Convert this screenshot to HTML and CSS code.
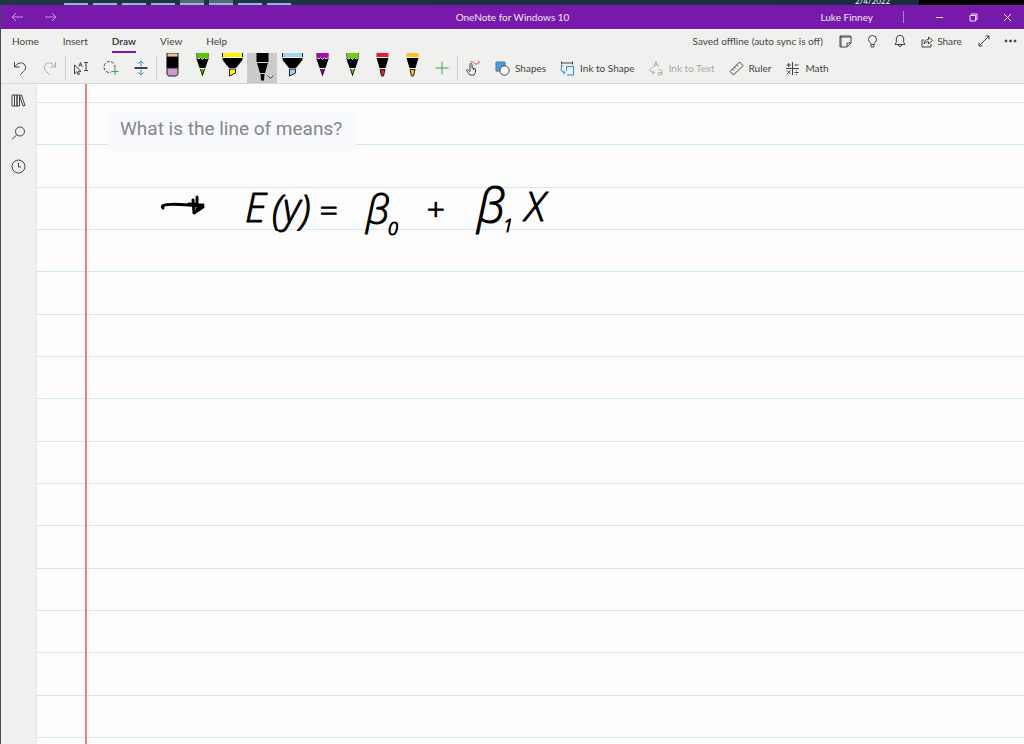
FILE: index.html
```html
<!DOCTYPE html>
<html lang="en">
<head>
  <meta charset="utf-8">
  <title>OneNote for Windows 10</title>
  <link rel="stylesheet" href="styles.css">
</head>
<body>
  <div class="taskbar">
    <div class="running">
      <i></i><i></i><i></i><i></i><i class="active"></i><i class="active"></i><i></i><i></i>
    </div>
    <div class="date">2/4/2022</div>
    <div class="desktop"></div>
  </div>

  <div class="app">
    <header class="titlebar">
      <div class="nav">
        <button aria-label="Back"><svg width="13" height="10" viewBox="0 0 13 10"><path d="M12 5H1M5 1L1 5l4 4"/></svg></button>
        <button aria-label="Forward"><svg width="13" height="10" viewBox="0 0 13 10"><path d="M1 5h11M8 1l4 4-4 4"/></svg></button>
      </div>
      <div class="title">OneNote for Windows 10</div>
      <div class="window">
        <span class="user">Luke Finney</span>
        <span class="bar"></span>
        <button aria-label="Minimize"><svg width="9" height="9" viewBox="0 0 9 9"><path d="M1 4.500h7"/></svg></button>
        <button aria-label="Restore"><svg width="9" height="9" viewBox="0 0 9 9"><path d="M1 2.500h5.500v5.500H1zM2.500 2.500V1H8v5.500H6.500"/></svg></button>
        <button aria-label="Close"><svg width="9" height="9" viewBox="0 0 9 9"><path d="M1 1l7 7M8 1L1 8"/></svg></button>
      </div>
    </header>

    <div class="ribbon">
      <div class="menu">
        <nav class="tabs">
          <a href="#">Home</a>
          <a href="#">Insert</a>
          <a href="#" class="current">Draw</a>
          <a href="#">View</a>
          <a href="#">Help</a>
        </nav>
        <div class="status">
          <span class="sync">Saved offline (auto sync is off)</span>
          <button aria-label="Feed"><svg width="13" height="13" viewBox="0 0 13 13"><path d="M1 1h11v7l-4 4H1zM12 8H8v4"/><path d="M1 2h11M2 1v11"/></svg></button>
          <button aria-label="Tell me"><svg width="11" height="13" viewBox="0 0 11 13"><path d="M4 9.500C4 7.500 1.500 7 1.500 4.500a4 4 0 0 1 8 0C9.500 7 7 7.500 7 9.500zM4 9.500V12h3V9.500"/></svg></button>
          <button aria-label="Notifications"><svg width="12" height="14" viewBox="0 0 12 14"><path d="M1 10.500h10L9.700 8.500V5a3.700 3.700 0 0 0-7.400 0v3.500zM4.500 11a1.500 1.500 0 0 0 3 0"/></svg></button>
          <button class="share"><svg width="12" height="13" viewBox="0 0 12 13"><path d="M3 5H1v7h9V9M3 9c0-3 2-4.500 4.500-4.500V2L11.500 5.500 7.500 9V6.700C5.500 6.700 4 7.500 3 9z"/></svg>Share</button>
          <button aria-label="Full screen"><svg width="12" height="12" viewBox="0 0 12 12"><path d="M1 11L11 1M7.500 1H11v3.500M1 7.500V11h3.500"/></svg></button>
          <button class="more" aria-label="More"><svg width="13" height="4" viewBox="0 0 13 4"><circle cx="2" cy="2" r="1"/><circle cx="6.500" cy="2" r="1"/><circle cx="11" cy="2" r="1"/></svg></button>
        </div>
      </div>

      <div class="tools">
        <button aria-label="Undo"><svg width="14" height="16" viewBox="0 0 14 16"><path d="M1.500 2v5h5M1.500 7C4 3.500 8 1.500 11 4c3 3 1.500 5.500-.5 7.500L7.500 14.500"/></svg></button>
        <button class="off" aria-label="Redo"><svg width="14" height="16" viewBox="0 0 14 16"><path d="M12.500 2v5h-5M12.500 7C10 3.500 6 1.500 3 4c-3 3-1.500 5.500.5 7.500L6.500 14.500"/></svg></button>
        <span class="sep"></span>
        <button aria-label="Select or type"><svg width="16" height="16" viewBox="0 0 16 16"><path d="M1.500 5v9l2.300-2.200 1.500 3 1.200-.6-1.400-2.800H8zM6 6.500L7.500 2.500 9.200 6.500M6.500 5.200h2.200M11 2.500h4M13 2.500v8M11 10.500h4"/></svg></button>
        <button aria-label="Lasso select"><svg width="16" height="16" viewBox="0 0 16 16"><circle cx="6.500" cy="7" r="5.500" stroke-dasharray="3 1.500"/><path d="M8 11.500h8M12 7.500v8" stroke="#f0f0ee" stroke-width="3"/><path class="green" d="M8.500 11.500h7M12 8v7"/></svg></button>
        <button aria-label="Insert space"><svg width="14" height="16" viewBox="0 0 14 16"><path d="M.5 8h13" stroke-width="2"/><path class="blue" d="M7 6.500V1M4.500 3.500L7 1l2.500 2.500M7 9.500V15M4.500 12.500L7 15l2.500-2.500"/></svg></button>
        <span class="sep"></span>

        <button class="pen" aria-label="Eraser"><svg width="13" height="24" viewBox="0 0 13 24"><path class="edge" fill="#ecc98d" d="M1 0h11v4H1z"/><path class="body" d="M.5 4h12v11H.5z"/><path class="edge" fill="#cf96cf" d="M1 15h11v6l-1.500 2h-8L1 21z"/></svg></button>
        <button class="pen" aria-label="Green pencil"><svg width="13" height="24" viewBox="0 0 13 24"><path class="body" d="M.5 0h12v6L6.500 23.500.5 6z"/><path fill="#55c800" d="M1 0h11v4l-2 1.500L8.500 4 6.500 6 4.500 4 3 5.500 1 4z"/><path class="trim" d="M.5 4.500L3 6l1.500-1.500 2 2 2-2L10 6l2.500-1.500"/><path fill="#55c800" d="M4.800 16h3.400L6.500 21z"/><path class="trim" d="M3.500 15.500h6"/></svg></button>
        <button class="pen" aria-label="Yellow highlighter"><svg width="21" height="24" viewBox="0 0 21 24"><path fill="#fff200" d="M1 0h19v4H1z"/><path class="edge" d="M.5 0v4M20.500 0v4"/><path class="body" d="M.5 5h20v2L14 15H7L.5 7z"/><path class="edge" fill="#fff200" d="M7.500 16h6v4L7.500 23z"/></svg></button>
        <button class="pen selected" aria-label="Black pen"><svg width="13" height="28" viewBox="0 0 13 28"><path class="body" d="M.5 0h12v9H.5zM1 10h11L9 20H4zM4.500 21h4L8 27.500H5z"/></svg><svg class="chevron" width="7" height="5" viewBox="0 0 7 5"><path d="M.5.500l3 3 3-3"/></svg></button>
        <button class="pen" aria-label="Blue highlighter"><svg width="21" height="24" viewBox="0 0 21 24"><path fill="#a2d3f5" d="M1 0h19v4H1z"/><path class="edge" d="M.5 0v4M20.500 0v4"/><path class="body" d="M.5 5h20v2L14 15H7L.5 7z"/><path class="edge" fill="#a2d3f5" d="M7.500 16h6v4L7.500 23z"/></svg></button>
        <button class="pen" aria-label="Purple pencil"><svg width="13" height="24" viewBox="0 0 13 24"><path class="body" d="M.5 0h12v6L6.500 23.500.5 6z"/><path fill="#b800b8" d="M1 0h11v4l-2 1.500L8.500 4 6.500 6 4.500 4 3 5.500 1 4z"/><path class="trim" d="M.5 4.500L3 6l1.500-1.500 2 2 2-2L10 6l2.500-1.500"/><path fill="#b800b8" d="M4.800 16h3.400L6.500 21z"/><path class="trim" d="M3.500 15.500h6"/></svg></button>
        <button class="pen" aria-label="Lime pencil"><svg width="13" height="24" viewBox="0 0 13 24"><path class="body" d="M.5 0h12v6L6.500 23.500.5 6z"/><path fill="#66d500" d="M1 0h11v4l-2 1.500L8.500 4 6.500 6 4.500 4 3 5.500 1 4z"/><path class="trim" d="M.5 4.500L3 6l1.500-1.500 2 2 2-2L10 6l2.500-1.500"/><path fill="#66d500" d="M4.800 16h3.400L6.500 21z"/><path class="trim" d="M3.500 15.500h6"/></svg></button>
        <button class="pen" aria-label="Red pen"><svg width="13" height="24" viewBox="0 0 13 24"><path fill="#e81e2e" d="M.5 0h12v4H.5z"/><path class="body" d="M.5 5h12L9.500 15h-6z"/><path class="edge" fill="#e81e2e" d="M4 16.500h5L7.500 23h-2z"/></svg></button>
        <button class="pen" aria-label="Gold pen"><svg width="13" height="24" viewBox="0 0 13 24"><path fill="#ffc01e" d="M.5 0h12v4H.5z"/><path class="body" d="M.5 5h12L9.500 15h-6z"/><path class="edge" fill="#ffc01e" d="M4 16.500h5L7.500 23h-2z"/></svg></button>
        <button aria-label="Add pen"><svg width="14" height="14" viewBox="0 0 14 14"><path class="green" d="M7 .500v13M.5 7h13"/></svg></button>
        <span class="sep"></span>
        <button aria-label="Draw with touch"><svg width="16" height="16" viewBox="0 0 16 16"><path d="M5 9V4.500a1 1 0 0 1 2 0V8l3.500 1v3L9 15H5L1.500 10.500c0-1 1-1.300 1.800-.5L5 11.500V9M8.500 8.500V10"/><path class="red" d="M5.500 2C8 .5 8.500 4 11.500 4S15 1.500 13 1"/></svg></button>

        <button class="wide"><svg width="15" height="15" viewBox="0 0 15 15"><path d="M1 1h9v9H1z" fill="#4ba0dc" stroke="#2b7fc0"/><circle cx="9.500" cy="9.500" r="4.700" fill="#f6f6f4"/></svg>Shapes</button>
        <button class="wide"><svg width="15" height="15" viewBox="0 0 15 15"><path d="M1 2h12M1.500 .500v3M12.500 .500v3"/><path class="blue" d="M13.500 5v9H7M6.500 10V5.500h7M3 4.500C0 7 .5 11.500 5 11.500M3 9.500l2 2-2 2M1.500 4v3"/></svg>Ink to Shape</button>
        <button class="wide off" disabled><svg width="15" height="15" viewBox="0 0 15 15"><path d="M4.500 6L7 .500 9.500 6M5.500 4h3M3.500 6.500C0 7.500 0 11.500 5 11.500M3.500 9.500l2 2-2 2M9.500 9.500c1-1 3.500-1 3.500 1V14M13 11.500c-5-.5-5 2.500-2.500 2.500 1.500 0 2.500-1 2.500-1.500"/></svg>Ink to Text</button>
        <button class="wide"><svg width="15" height="15" viewBox="0 0 15 15"><path d="M1 10.500L10.500 1 14 4.500 4.500 14zM3.500 8l1.500 1.500M5.500 6L7 7.500M7.500 4L9 5.500"/></svg>Ruler</button>
        <button class="wide"><svg width="15" height="15" viewBox="0 0 15 15"><path d="M7.500 1v13M1 7.500h13M1.500 4H6M3.700 2v4M9.500 4h4M2 9.500L5.500 13M5.500 9.500L2 13M9.500 11.500h4M11.500 9v1M11.500 13v1"/></svg>Math</button>
      </div>
    </div>

    <div class="workspace">
      <aside class="sidebar">
        <button aria-label="Notebooks"><svg width="15" height="13" viewBox="0 0 15 13"><path d="M1 1h2.500v11H1zM3.500 1H6v11H3.500zM6 1h2.500v11H6zM8.500 1.500L10.500 1 14 11.500l-2 .5z"/></svg></button>
        <button aria-label="Search"><svg width="15" height="15" viewBox="0 0 15 15"><circle cx="9" cy="5.500" r="4.500"/><path d="M5.700 8.800L1 13.500"/></svg></button>
        <button aria-label="Recent"><svg width="15" height="15" viewBox="0 0 15 15"><circle cx="7.500" cy="7.500" r="6.500"/><path d="M7.500 4v4H10"/></svg></button>
      </aside>
      <main class="paper">
        <h1 class="question">What is the line of means?</h1>
        <svg class="ink" width="400" height="86" viewBox="0 0 400 86">
          <path d="M6 47C1 42 23 43 43 45"/>
          <path d="M36 39l1 13 9-6-10-2M40 36v14M32 43l14 1"/>
          <text x="88" y="61">E</text>
          <text x="115" y="63">(</text>
          <text x="126" y="61">y</text>
          <text x="143" y="63">)</text>
          <text class="sign" x="162" y="60">=</text>
          <text x="209" y="63">β</text>
          <text class="sub" x="231" y="74">0</text>
          <text class="sign" x="269" y="60">+</text>
          <text class="tall" x="320" y="62">β</text>
          <text class="sub" x="346" y="71">1</text>
          <text x="368" y="60">X</text>
        </svg>
      </main>
    </div>
  </div>
</body>
</html>
```
FILE: styles.css
```css
* {
  box-sizing: border-box;
}

body {
  margin: 0;
  min-height: 100vh;
  display: flex;
  flex-direction: column;
  font-family: Lato, "Open Sans", sans-serif;
  font-size: 10px;
  color: #444;
  background: #fdfdfd;
}

button {
  display: flex;
  align-items: center;
  justify-content: center;
  padding: 0;
  border: 0;
  background: none;
  font: inherit;
  color: inherit;
}

svg {
  flex: none;
  fill: none;
  stroke: currentColor;
}

/* bottom edge of the taskbar */
.taskbar {
  display: flex;
  height: 5px;
  background: linear-gradient(90deg, #1e3842, #1a2b40);
  overflow: hidden;
}

.running {
  display: flex;
  gap: 5px;
  margin-left: 64px;
}

.running i {
  width: 24px;
  border-bottom: 2px solid #8fb6dc;
}

.running .active {
  background: #566a75;
}

.date {
  display: flex;
  align-items: flex-end;
  margin-left: auto;
  width: 64px;
  font-size: 8px;
  line-height: 8px;
  color: #fff;
}

.desktop {
  width: 105px;
  background: #000;
}

.app {
  flex: 1;
  display: flex;
  flex-direction: column;
  border-left: 1px solid #4c4650;
}

.titlebar {
  display: grid;
  grid-template-columns: 1fr auto 1fr;
  align-items: center;
  height: 24px;
  background: #7719aa;
  color: #f3e6fa;
}

.nav {
  display: flex;
  color: #c99be2;
}

.nav button {
  width: 33px;
}

.window {
  display: flex;
  align-items: center;
  justify-content: flex-end;
}

.window button {
  width: 34px;
  height: 24px;
}

.bar {
  width: 1px;
  height: 12px;
  margin: 0 18px 0 30px;
  background: #b27ad0;
}

.ribbon {
  background: #f0f0ee;
  border-bottom: 1px solid #d6d6d4;
}

.menu {
  display: flex;
  justify-content: space-between;
  height: 24px;
}

.tabs {
  display: flex;
}

.tabs a {
  display: flex;
  align-items: center;
  margin: 0 13px 0 11px;
  border-top: 2px solid transparent;
  border-bottom: 2px solid transparent;
  color: #444;
  text-decoration: none;
}

.tabs .current {
  border-bottom-color: #7719aa;
  font-weight: 700;
}

.status {
  display: flex;
  align-items: center;
}

.sync {
  margin-right: 9px;
}

.status button {
  width: 27px;
  height: 24px;
}

.status .share {
  width: 57px;
  gap: 4px;
}

.more svg {
  fill: currentColor;
}

.tools {
  display: flex;
  height: 30px;
  padding-left: 4px;
}

.tools button {
  width: 30px;
}

.tools .wide {
  width: auto;
  gap: 5px;
  padding: 0 7px;
}

.tools .off {
  color: #ababa9;
}

.sep {
  width: 1px;
  height: 24px;
  margin-top: 3px;
  background: #d0d0ce;
}

.tools .pen {
  align-items: flex-start;
}

.pen svg {
  stroke: none;
}

.pen .body {
  fill: #000;
}

.pen .edge {
  stroke: #222;
}

.pen .trim {
  stroke: #eee;
}

.tools .selected {
  position: relative;
  background: #cbcbc9;
}

.selected .chevron {
  position: absolute;
  right: 3px;
  bottom: 3px;
  stroke: #444;
}

.green {
  stroke: #3fa75c;
}

.blue {
  stroke: #2f8fc9;
}

.red {
  stroke: #dc4050;
}

.workspace {
  flex: 1;
  display: flex;
}

.sidebar {
  width: 36px;
  background: #f0f0ee;
  border-right: 1px solid #e6e6e4;
}

.sidebar button {
  width: 35px;
  height: 33px;
}

/* rules repeat every three lines, the margin line runs over them */
.paper {
  flex: 1;
  background:
    linear-gradient(#f08080, #f08080) 48px 0 / 2px 100% no-repeat,
    linear-gradient(#cdebf0 1px, transparent 1px 42px, #cdebf0 42px 43px, transparent 43px 85px, #cdebf0 85px 86px, transparent 86px) 0 18px / 100% 127px,
    #fdfdfd;
}

.question {
  width: fit-content;
  margin: 28px 0 0 71px;
  padding: 0 14px 5px 12px;
  background: #f8f9fc;
  font-family: Roboto, sans-serif;
  font-size: 19px;
  font-weight: 400;
  line-height: 34px;
  color: #85878a;
}

.ink {
  display: block;
  margin: 10px 0 0 120px;
  stroke: #000;
  stroke-width: 3;
  stroke-linecap: round;
  stroke-linejoin: round;
}

.ink text {
  fill: #000;
  stroke-width: 1;
  font-family: "Open Sans", "DejaVu Sans", sans-serif;
  font-size: 40px;
  font-style: italic;
  font-weight: 300;
}

.ink .sign {
  font-size: 32px;
}

.ink .tall {
  font-size: 48px;
}

.ink .sub {
  font-size: 18px;
}
```
